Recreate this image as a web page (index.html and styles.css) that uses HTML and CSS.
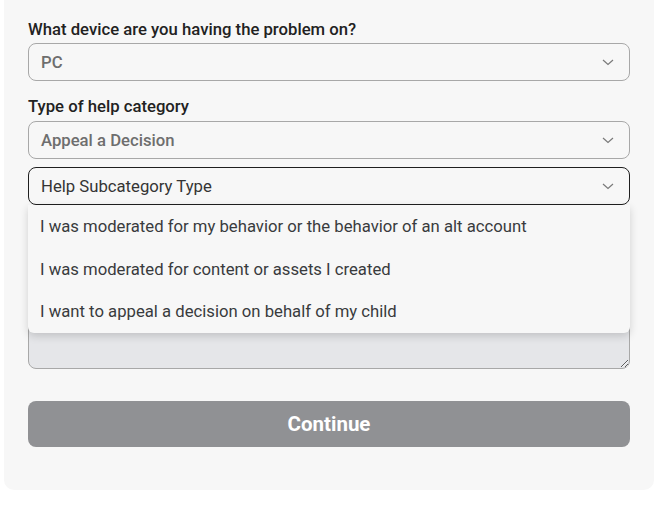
FILE: index.html
```html
<!DOCTYPE html>
<html lang="en">
<head>
    <meta charset="UTF-8">
    <meta name="viewport" content="width=device-width, initial-scale=1.0">
    <title>Support Form</title>
    <link rel="stylesheet" href="styles.css">
</head>
<body>
    <div class="card">
        <label class="field-label">What device are you having the problem on?</label>
        <div class="select">
            <span class="value">PC</span>
            <svg class="chevron" width="12" height="7" viewBox="0 0 12 7"><path d="M1 1l5 4.5L11 1" fill="none" stroke="#7a7a7a" stroke-width="1.2"/></svg>
        </div>

        <label class="field-label second">Type of help category</label>
        <div class="select">
            <span class="value">Appeal a Decision</span>
            <svg class="chevron" width="12" height="7" viewBox="0 0 12 7"><path d="M1 1l5 4.5L11 1" fill="none" stroke="#7a7a7a" stroke-width="1.2"/></svg>
        </div>

        <div class="select-wrap">
            <div class="select open">
                <span class="placeholder">Help Subcategory Type</span>
                <svg class="chevron" width="12" height="7" viewBox="0 0 12 7"><path d="M1 1l5 4.5L11 1" fill="none" stroke="#7a7a7a" stroke-width="1.2"/></svg>
            </div>
            <ul class="menu">
                <li>I was moderated for my behavior or the behavior of an alt account</li>
                <li>I was moderated for content or assets I created</li>
                <li>I want to appeal a decision on behalf of my child</li>
            </ul>
        </div>

        <textarea class="details"></textarea>

        <button class="continue" disabled>Continue</button>
    </div>
</body>
</html>
```

FILE: styles.css
```css
body { margin: 0; background-color: #fff; font-family: Roboto, "Liberation Sans", sans-serif; }
.card {
    width: 650px;
    margin-left: 4px;
    box-sizing: border-box;
    padding: 20px 24px 43px;
    background-color: #f7f7f7;
    border-radius: 0 0 10px 10px;
    display: flex;
    flex-direction: column;
}
.field-label { font-size: 16.7px; line-height: 20px; font-weight: 500; color: #222; margin-bottom: 3px; }
.field-label.second { margin-top: 16px; margin-bottom: 4px; }
.select {
    height: 38px;
    box-sizing: border-box;
    border: 1px solid #a8a8a8;
    border-radius: 8px;
    display: flex;
    align-items: center;
    justify-content: space-between;
    padding: 0 15px 0 12px;
    font-size: 16.7px;
}
.select .value { color: #6e6e6e; font-weight: 500; }
.select .placeholder { color: #343434; }
.select.open { border-color: #1f1f1f; }
.chevron { margin-top: 1px; }
.select-wrap { position: relative; margin-top: 8px; }
.menu {
    position: absolute;
    top: 38px;
    left: 0;
    right: 0;
    margin: 0;
    padding: 0;
    list-style: none;
    background-color: #f7f7f7;
    border-radius: 0 0 6px 6px;
    box-shadow: 0 3px 8px rgba(0, 0, 0, 0.16);
    z-index: 2;
}
.menu li { height: 42.67px; line-height: 44px; padding-left: 12px; font-size: 16.7px; color: #393b3d; }
.details {
    margin-top: 16px;
    height: 148px;
    box-sizing: border-box;
    border: 1px solid #a8a8a8;
    border-radius: 8px;
    background-color: #e5e6e9;
    resize: vertical;
}
.continue {
    margin-top: 32px;
    height: 46px;
    border: none;
    border-radius: 8px;
    background-color: #909194;
    color: #fff;
    font-family: inherit;
    font-size: 20.5px;
    font-weight: 700;
}
```
